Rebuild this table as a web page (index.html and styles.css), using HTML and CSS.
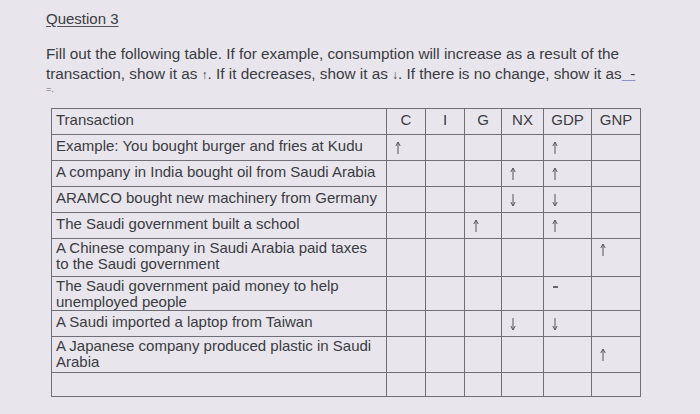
FILE: index.html
```html
<!DOCTYPE html>
<html>
<head>
<meta charset="utf-8">
<link rel="stylesheet" href="styles.css">
</head>
<body>
<div class="page">
  <h1 class="title">Question 3</h1>
  <p class="intro">Fill out the following table. If for example, consumption will increase as a result of the transaction, show it as <span class="sym">↑</span>. If it decreases, show it as <span class="sym">↓</span>. If there is no change, show it as<span class="link">&nbsp; -</span></p>
  <p class="tiny">=.</p>
  <table class="grid">
    <colgroup>
      <col class="c-tx"><col class="c-c"><col class="c-i"><col class="c-g"><col class="c-nx"><col class="c-gdp"><col class="c-gnp">
    </colgroup>
    <tr class="r-head">
      <td>Transaction</td><td class="hd">C</td><td class="hd">I</td><td class="hd">G</td><td class="hd">NX</td><td class="hd">GDP</td><td class="hd">GNP</td>
    </tr>
    <tr class="r-one">
      <td>Example: You bought burger and fries at Kudu</td>
      <td class="ar"><svg class="up" viewBox="0 0 8 14"><path d="M4 13V1M1.8 5L4 1l2.2 4"/></svg></td><td></td><td></td><td></td>
      <td class="ar"><svg class="up" viewBox="0 0 8 14"><path d="M4 13V1M1.8 5L4 1l2.2 4"/></svg></td><td></td>
    </tr>
    <tr class="r-one">
      <td>A company in India bought oil from Saudi Arabia</td>
      <td></td><td></td><td></td>
      <td class="ar"><svg class="up" viewBox="0 0 8 14"><path d="M4 13V1M1.8 5L4 1l2.2 4"/></svg></td>
      <td class="ar"><svg class="up" viewBox="0 0 8 14"><path d="M4 13V1M1.8 5L4 1l2.2 4"/></svg></td><td></td>
    </tr>
    <tr class="r-one">
      <td>ARAMCO bought new machinery from Germany</td>
      <td></td><td></td><td></td>
      <td class="ar"><svg class="up" viewBox="0 0 8 14"><path d="M4 1v12M1.8 9L4 13l2.2-4"/></svg></td>
      <td class="ar"><svg class="up" viewBox="0 0 8 14"><path d="M4 1v12M1.8 9L4 13l2.2-4"/></svg></td><td></td>
    </tr>
    <tr class="r-one">
      <td>The Saudi government built a school</td>
      <td></td><td></td>
      <td class="ar"><svg class="up" viewBox="0 0 8 14"><path d="M4 13V1M1.8 5L4 1l2.2 4"/></svg></td><td></td>
      <td class="ar"><svg class="up" viewBox="0 0 8 14"><path d="M4 13V1M1.8 5L4 1l2.2 4"/></svg></td><td></td>
    </tr>
    <tr class="r-tall">
      <td>A Chinese company in Saudi Arabia paid taxes to the Saudi government</td>
      <td></td><td></td><td></td><td></td><td></td>
      <td class="ar top"><svg class="up" viewBox="0 0 8 14"><path d="M4 13V1M1.8 5L4 1l2.2 4"/></svg></td>
    </tr>
    <tr class="r-mid">
      <td>The Saudi government paid money to help unemployed people</td>
      <td></td><td></td><td></td><td></td>
      <td class="ar dashcell"><span class="dash"></span></td><td></td>
    </tr>
    <tr class="r-one">
      <td>A Saudi imported a laptop from Taiwan</td>
      <td></td><td></td><td></td>
      <td class="ar"><svg class="up" viewBox="0 0 8 14"><path d="M4 1v12M1.8 9L4 13l2.2-4"/></svg></td>
      <td class="ar"><svg class="up" viewBox="0 0 8 14"><path d="M4 1v12M1.8 9L4 13l2.2-4"/></svg></td><td></td>
    </tr>
    <tr class="r-jp">
      <td>A Japanese company produced plastic in Saudi Arabia</td>
      <td></td><td></td><td></td><td></td><td></td>
      <td class="ar"><svg class="up" viewBox="0 0 8 14"><path d="M4 13V1M1.8 5L4 1l2.2 4"/></svg></td>
    </tr>
    <tr class="r-empty">
      <td></td><td></td><td></td><td></td><td></td><td></td><td></td>
    </tr>
  </table>
</div>
</body>
</html>
```

FILE: styles.css
```css
html, body {
  margin: 0;
  padding: 0;
}
body {
  background: #e8e6ec;
  font-family: "Liberation Sans", Arial, sans-serif;
  color: #3b3b42;
  width: 700px;
  height: 414px;
  overflow: hidden;
}
.page {
  padding: 9px 0 0 46px;
}
.title {
  margin: 0;
  font-size: 15px;
  font-weight: normal;
  line-height: 20px;
  text-decoration: underline;
  text-decoration-color: #55555c;
  text-underline-offset: 2px;
}
.intro {
  margin: 15px 0 0 0;
  font-size: 15.3px;
  line-height: 20px;
  width: 620px;
}
.sym {
  font-size: 12px;
}
.link {
  text-decoration: underline;
  text-decoration-color: #8d93c8;
}
.tiny {
  margin: -2px 0 0 0;
  font-size: 9px;
  line-height: 12px;
  color: #66666e;
}
.grid {
  margin: 13px 0 0 5px;
  border-collapse: collapse;
  table-layout: fixed;
  width: 589px;
  font-size: 15px;
  line-height: 16px;
}
.c-tx { width: 335px; }
.c-c { width: 39px; }
.c-i { width: 39px; }
.c-g { width: 37px; }
.c-nx { width: 42px; }
.c-gdp { width: 48px; }
.c-gnp { width: 49px; }
.grid td {
  border: 1px solid #6f6f78;
  padding: 3px 4px 0 4px;
  vertical-align: top;
}
.r-tall td, .r-mid td, .r-jp td {
  padding-top: 1px;
}
.grid td.hd {
  text-align: center;
  padding-left: 0;
  padding-right: 0;
}
.r-head { height: 26px; }
.r-one { height: 26px; }
.r-tall { height: 38px; }
.r-mid { height: 34px; }
.r-jp { height: 36px; }
.r-empty { height: 24px; }
.grid td.ar {
  padding: 0 0 0 7px;
  vertical-align: middle;
}
.grid td.ar.top {
  vertical-align: top;
  padding-top: 4px;
}
.up {
  display: block;
  width: 8px;
  height: 14px;
  fill: none;
  stroke: #55555c;
  stroke-width: 1;
}
.grid td.dashcell {
  vertical-align: top;
  padding-top: 9px;
  padding-left: 9px;
}
.dash {
  display: block;
  width: 5px;
  height: 2px;
  background: #66666e;
}
```
